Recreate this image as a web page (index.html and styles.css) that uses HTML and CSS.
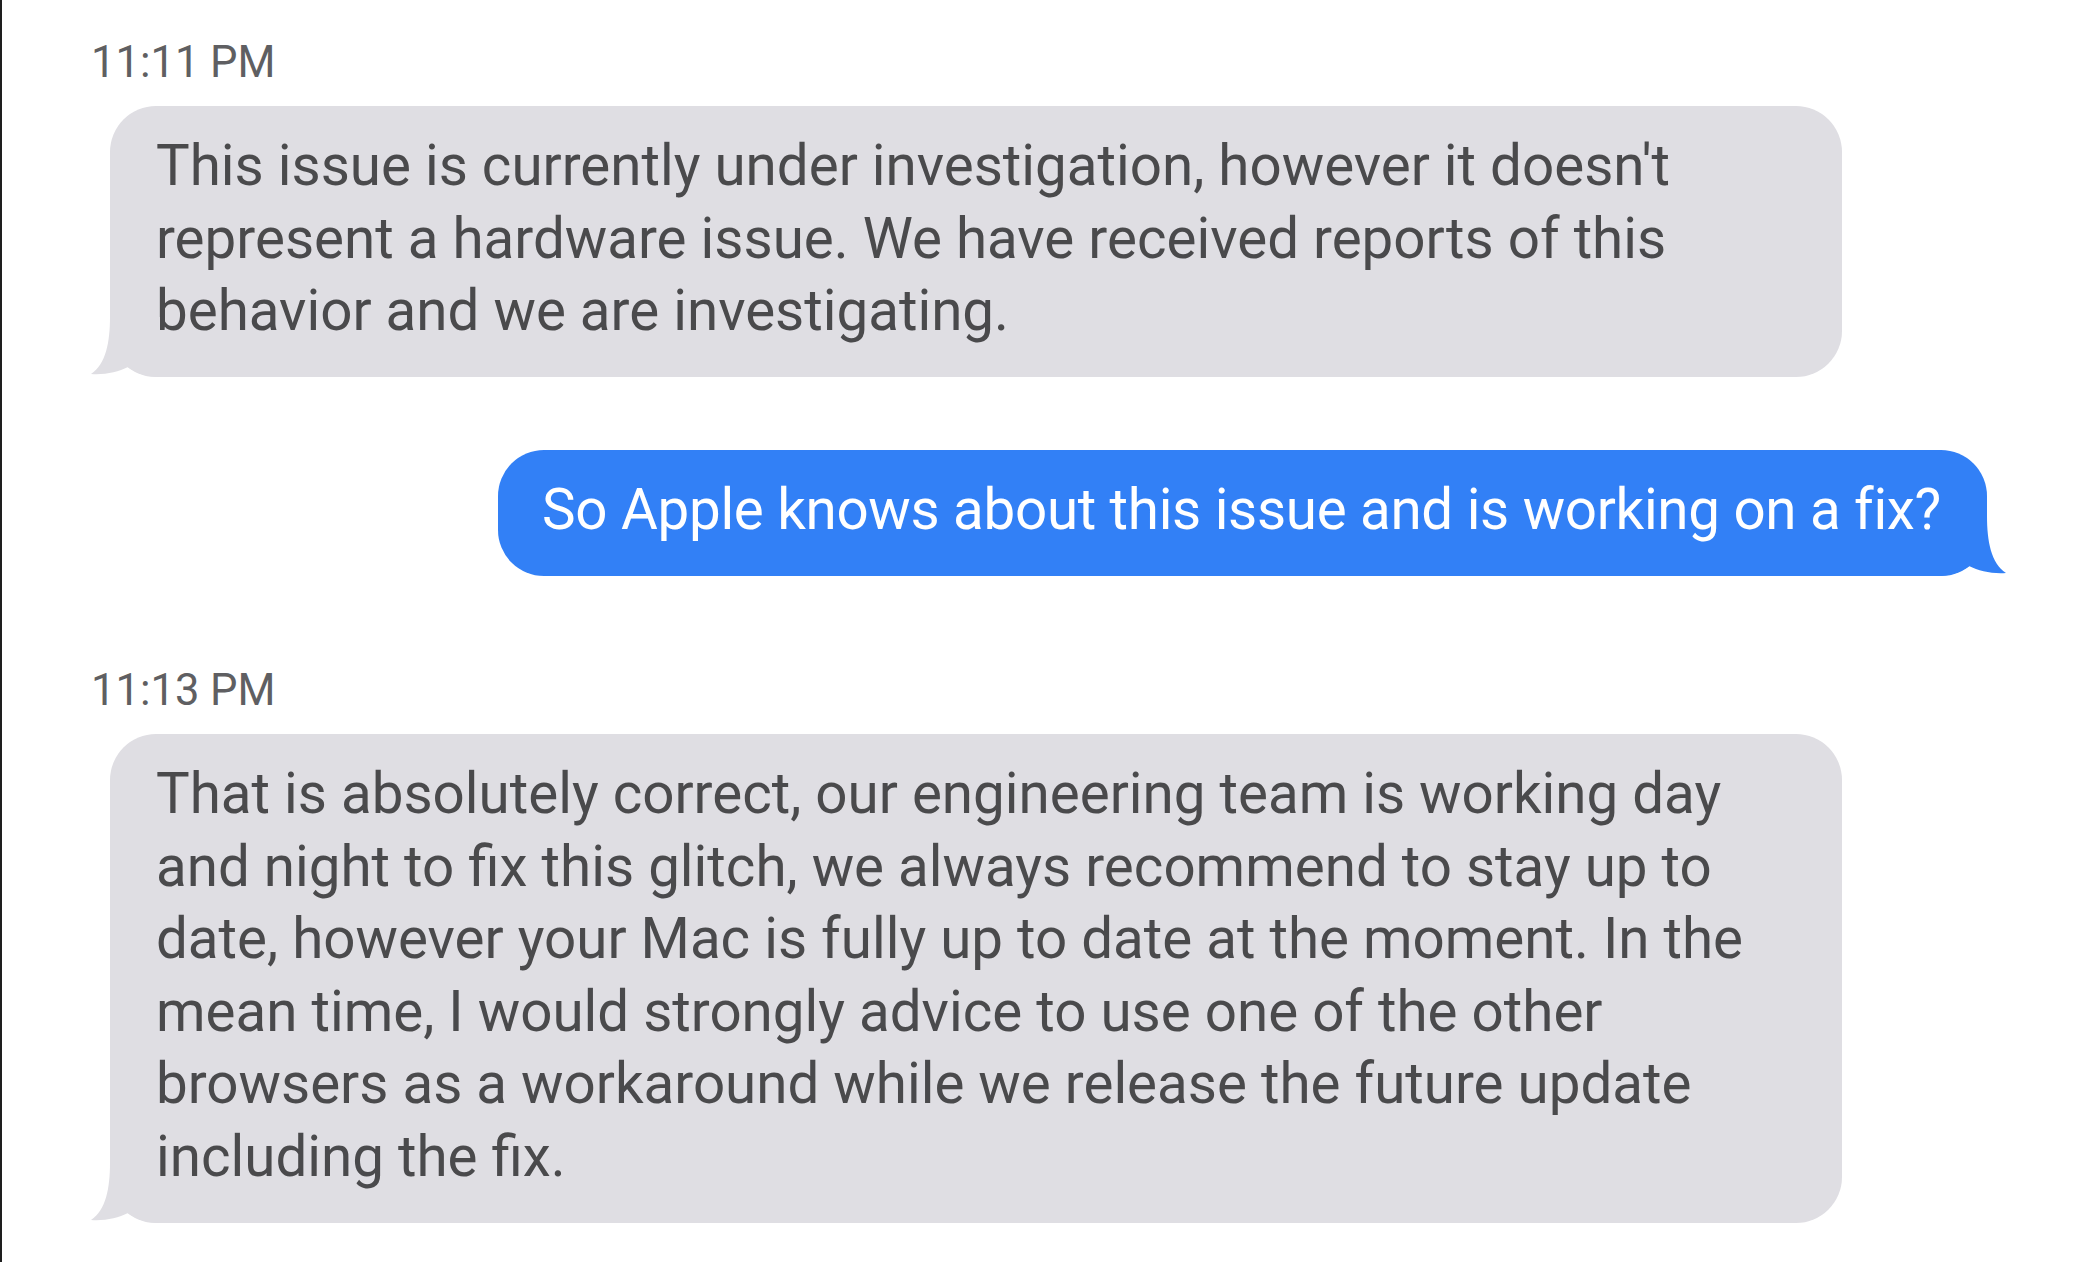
FILE: index.html
```html
<!DOCTYPE html>
<html lang="en">
<head>
<meta charset="utf-8">
<title>Messages</title>
<link rel="stylesheet" href="styles.css">
</head>
<body>
<div class="page">
  <div class="time">11:11 PM</div>
  <div class="bubble in">
    <p class="text">This issue is currently under investigation, however it doesn't<br>represent a hardware issue. We have received reports of this<br>behavior and we are investigating.</p>
    <svg class="tail tail-left" viewBox="0 0 70 60" width="70" height="60" aria-hidden="true"><path d="M20,0 C20,25 16,47 1,57 C15,58 28,55 38,50 C46,56 56,60 70,60 L70,0 Z"/></svg>
  </div>
  <div class="bubble out">
    <p class="text">So Apple knows about this issue and is working on a fix?</p>
    <svg class="tail tail-right" viewBox="0 0 70 60" width="70" height="60" aria-hidden="true"><path d="M20,0 C20,25 16,47 1,57 C15,58 28,55 38,50 C46,56 56,60 70,60 L70,0 Z"/></svg>
  </div>
  <div class="time time-second">11:13 PM</div>
  <div class="bubble in">
    <p class="text">That is absolutely correct, our engineering team is working day<br>and night to fix this glitch, we always recommend to stay up to<br>date, however your Mac is fully up to date at the moment. In the<br>mean time, I would strongly advice to use one of the other<br>browsers as a workaround while we release the future update<br>including the fix.</p>
    <svg class="tail tail-left" viewBox="0 0 70 60" width="70" height="60" aria-hidden="true"><path d="M20,0 C20,25 16,47 1,57 C15,58 28,55 38,50 C46,56 56,60 70,60 L70,0 Z"/></svg>
  </div>
</div>
</body>
</html>
```

FILE: styles.css
```css
html, body {
  margin: 0;
  padding: 0;
  background: #ffffff;
}

.page {
  box-sizing: border-box;
  min-height: 100vh;
  border-left: 2px solid #1e1e1e;
  padding: 38px 105px 0 0;
  display: flex;
  flex-direction: column;
  font-family: Roboto, "Liberation Sans", Arial, sans-serif;
}

.time {
  font-size: 43.5px;
  line-height: 50px;
  color: #5f5f62;
  margin-left: 89px;
}

.time-second {
  margin-top: 90px;
}

.bubble {
  position: relative;
  box-sizing: border-box;
  border-radius: 46px;
  padding: 24px 46px 29.5px 46px;
}

.bubble .text {
  margin: 0;
  font-size: 56.5px;
  line-height: 72.5px;
  white-space: nowrap;
}

.bubble.in {
  width: 1732px;
  margin-left: 108px;
  margin-top: 18px;
  background: #dfdee3;
  color: #4a4a4c;
}

.bubble.out {
  align-self: flex-end;
  margin-top: 73px;
  padding-left: 44px;
  padding-right: 46px;
  background: #3280f6;
  color: #ffffff;
}

.bubble.out .text {
  letter-spacing: -0.3px;
}

.tail {
  position: absolute;
  bottom: 0;
  display: block;
}

.tail-left {
  left: -20px;
  fill: #dfdee3;
}

.tail-right {
  right: -20px;
  fill: #3280f6;
  transform: scaleX(-1);
}
```
